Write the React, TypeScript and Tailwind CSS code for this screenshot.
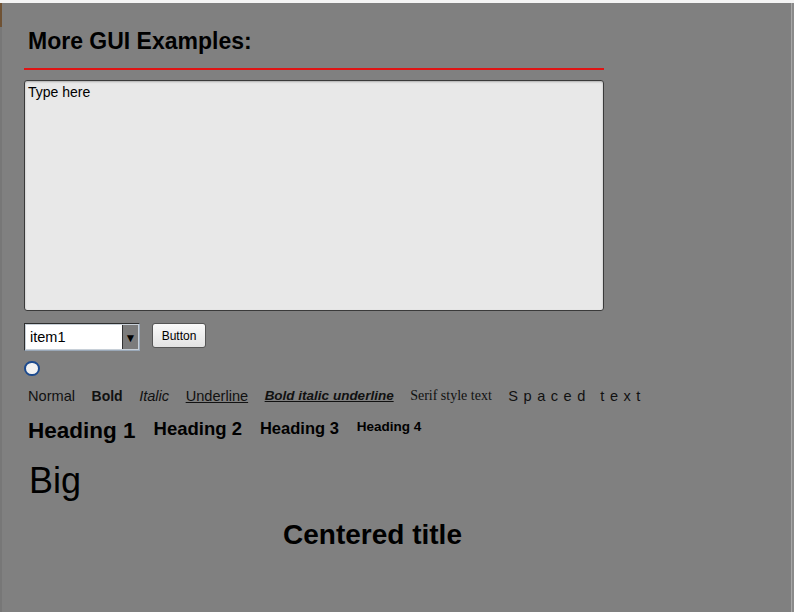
const App = () => {
  return (
    <div className="w-[794px] h-[612px] bg-[#f4f4f4] pt-[3px] overflow-hidden font-['Liberation_Sans',Arial,sans-serif] text-black">
      <div className="h-[609px] flex">
        <div className="w-[2px] h-full bg-[#777] flex flex-col">
          <div className="h-[24px] bg-[#6f5234]" />
        </div>
        <div className="w-[789px] h-full bg-[#808080] pl-[22px] pt-[25px]">
          {/* Title */}
          <h1 className="text-[23px] leading-[26px] font-bold pl-[4px]">More GUI Examples:</h1>
          <div className="mt-[14px] w-[580px] h-[2px] bg-[#e01414]" />

          {/* Text area */}
          <textarea
            defaultValue="Type here"
            className="mt-[10px] block w-[580px] h-[231px] resize-none bg-[#e8e8e8] border border-[#3a3a3a] rounded-[3px] p-[3px] text-[14px] leading-[16px] font-['Liberation_Sans',Arial,sans-serif] outline-none shadow-[inset_0_1px_2px_rgba(0,0,0,0.25)]"
          />

          {/* Select + button */}
          <div className="mt-[12px] flex items-start gap-[12px]">
            <div className="w-[116px] h-[28px] border border-[#2e2e2e] border-r-[#9aa8b8] border-b-[#9aa8b8] bg-[#c8d0d8] p-[1px] flex">
              <div className="flex-1 bg-white flex items-center pl-[4px] text-[14.5px] leading-[16px]">item1</div>
              <div className="w-[16px] bg-[#7c7c7c] border-l border-[#333] flex items-center justify-center text-[12px] leading-none pt-[2px]">▼</div>
            </div>
            <button className="w-[54px] h-[25px] bg-gradient-to-b from-[#fafafa] to-[#e2e2e2] border border-[#555] rounded-[3px] text-[12px] leading-[14px] font-['Liberation_Sans',Arial,sans-serif]">
              Button
            </button>
          </div>

          {/* Radio */}
          <div className="mt-[10px] w-[16px] h-[15px] rounded-full border-2 border-[#1c4a8e] bg-[#f2f2f2]" />

          {/* Text styles */}
          <div className="mt-[12px] pl-[4px] flex items-start gap-[16.5px] text-[14.6px] leading-[16px] text-[#111]">
            <span>Normal</span>
            <span className="font-bold text-[14px]">Bold</span>
            <span className="italic">Italic</span>
            <span className="underline">Underline</span>
            <span className="font-bold italic underline text-[13.5px]">Bold italic underline</span>
            <span className="font-['Liberation_Serif','Times_New_Roman',serif] text-[14px]">Serif style text</span>
            <span className="tracking-[5.5px]">Spaced text</span>
          </div>

          {/* Headings */}
          <div className="mt-[16px] pl-[4px] flex items-start gap-[18px] font-bold">
            <span className="text-[22.5px] leading-none">Heading 1</span>
            <span className="text-[18.5px] leading-none">Heading 2</span>
            <span className="text-[16.5px] leading-none">Heading 3</span>
            <span className="text-[13.5px] leading-none">Heading 4</span>
          </div>

          {/* Big */}
          <div className="mt-[20px] pl-[5px] text-[36px] leading-none">Big</div>

          {/* Centered title */}
          <div className="mt-[22px] w-[697px] text-center text-[28px] leading-none font-bold">Centered title</div>
        </div>
        <div className="w-[1px] h-full bg-[#a8a8a8]" />
        <div className="w-[2px] h-full bg-[#8a8a8a]" />
      </div>
    </div>
  );
};
export default App;
